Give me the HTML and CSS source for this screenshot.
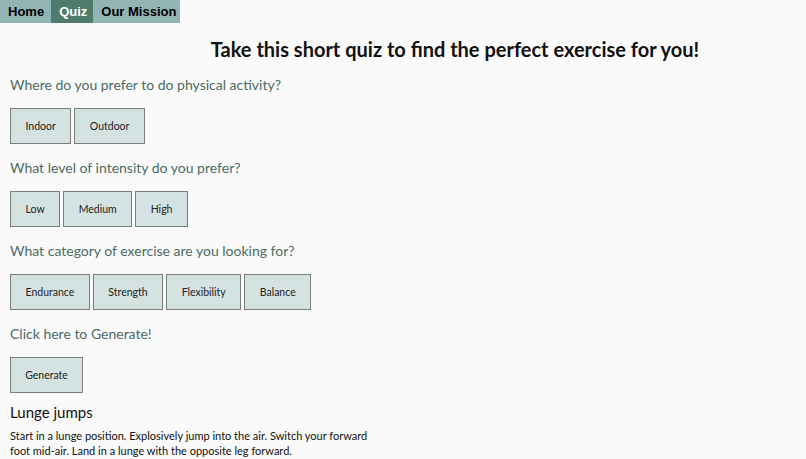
FILE: index.html
```html
<!DOCTYPE html>
<html lang="en">

<head>
    <meta charset="UTF-8">
    <title>Exercise Quiz</title>
    <link rel="stylesheet" href="styles.css">
</head>

<body>
    <nav>
        <a href="#">Home</a>
        <a href="#" class="valgt">Quiz</a>
        <a href="#">Our Mission</a>
    </nav>

    <h1>Take this short quiz to find the perfect exercise for you!</h1>

    <section class="spm">
        <h2>Where do you prefer to do physical activity?</h2>
        <div class="knapper">
            <button>Indoor</button>
            <button>Outdoor</button>
        </div>
    </section>

    <section class="spm">
        <h2>What level of intensity do you prefer?</h2>
        <div class="knapper">
            <button>Low</button>
            <button>Medium</button>
            <button>High</button>
        </div>
    </section>

    <section class="spm">
        <h2>What category of exercise are you looking for?</h2>
        <div class="knapper">
            <button>Endurance</button>
            <button>Strength</button>
            <button>Flexibility</button>
            <button>Balance</button>
        </div>
    </section>

    <section class="spm">
        <h2>Click here to Generate!</h2>
        <div class="knapper">
            <button class="generer">Generate</button>
        </div>
    </section>

    <section class="resultat">
        <h3>Lunge jumps</h3>
        <p>Start in a lunge position. Explosively jump into the air. Switch your forward foot mid-air. Land in a lunge with the opposite leg forward.</p>
    </section>
</body>

</html>
```

FILE: styles.css
```css
body {
    margin: 0;
    background-color: #fafafa;
    font-family: Lato, "Open Sans", sans-serif;
    color: #111;
}

nav {
    display: flex;
    width: 180px;
    background-color: #92b4b5;
    white-space: nowrap;
}

nav a {
    font-family: "Liberation Sans", Arial, sans-serif;
    font-weight: bold;
    font-size: 13px;
    line-height: 23px;
    padding: 0 7px 0 8px;
    color: black;
    text-decoration: none;
}

nav a.valgt {
    padding-right: 6px;
    background-color: #4e7b6c;
    color: white;
}

h1 {
    font-size: 20px;
    text-align: center;
    margin: 12px 0 0 0;
    padding-left: 104px;
    line-height: 28px;
}

.spm {
    padding-left: 10px;
}

.spm h2 {
    font-size: 14px;
    font-weight: normal;
    color: #4b6b64;
    margin: 0;
    padding-top: 14px;
    line-height: 20px;
}

.spm:first-of-type h2 {
    padding-top: 12px;
}

.knapper {
    display: flex;
    gap: 3px;
    margin-top: 13px;
}

button {
    font-family: Lato, "Open Sans", sans-serif;
    font-size: 10.5px;
    height: 36px;
    padding: 0 14.5px;
    background-color: #d4e3e2;
    border: 1px solid #7d7d7d;
    color: #222;
}

.generer {
    width: 73px;
    padding: 0;
}

.resultat {
    padding-left: 10px;
}

.resultat h3 {
    font-size: 15px;
    font-weight: normal;
    margin: 8px 0 0 0;
    line-height: 22px;
}

.resultat p {
    font-size: 11px;
    width: 368px;
    line-height: 15px;
    margin: 5px 0 0 0;
}
```
